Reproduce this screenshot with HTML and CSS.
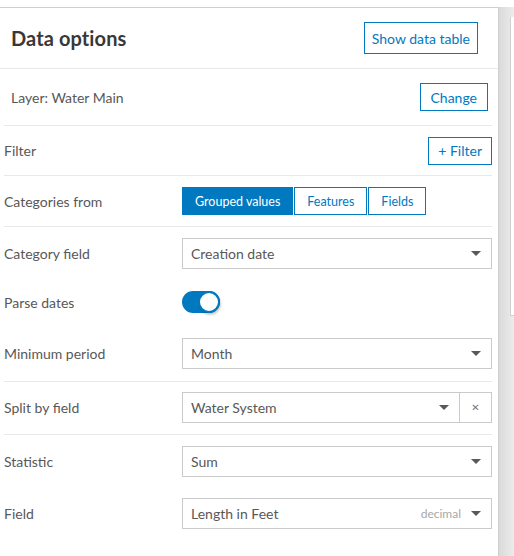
FILE: index.html
```html
<!DOCTYPE html>
<html lang="en">
<head>
  <meta charset="UTF-8" />
  <meta name="viewport" content="width=device-width, initial-scale=1.0" />
  <title>Data options</title>
  <link rel="stylesheet" href="styles.css">
</head>
<body>
  <div class="frame">
    <div class="panel">
      <div class="header">
        <h1>Data options</h1>
        <button class="btn">Show data table</button>
      </div>

      <div class="list">
        <div class="row layer-row">
          <span class="label">Layer: Water Main</span>
          <button class="btn">Change</button>
        </div>

        <div class="row filter-row">
          <span class="label">Filter</span>
          <button class="btn">+ Filter</button>
        </div>

        <div class="row">
          <span class="label">Categories from</span>
          <div class="control seg">
            <button class="btn on">Grouped values</button>
            <button class="btn">Features</button>
            <button class="btn">Fields</button>
          </div>
        </div>

        <div class="group">
          <div class="field">
            <span class="label">Category field</span>
            <div class="control select"><span>Creation date</span><i class="caret"></i></div>
          </div>
          <div class="field toggle-field">
            <span class="label">Parse dates</span>
            <div class="control"><span class="toggle"><span class="knob"></span></span></div>
          </div>
          <div class="field period">
            <span class="label">Minimum period</span>
            <div class="control select"><span>Month</span><i class="caret"></i></div>
          </div>
        </div>

        <div class="group split">
          <div class="field">
            <span class="label">Split by field</span>
            <div class="control combo">
              <div class="select"><span>Water System</span><i class="caret"></i></div>
              <button class="clear">&#x2715;</button>
            </div>
          </div>
        </div>

        <div class="group last">
          <div class="field">
            <span class="label">Statistic</span>
            <div class="control select"><span>Sum</span><i class="caret"></i></div>
          </div>
          <div class="field second">
            <span class="label">Field</span>
            <div class="control select"><span>Length in Feet</span><em class="hint">decimal</em><i class="caret"></i></div>
          </div>
        </div>
      </div>
    </div>

    <div class="side">
      <div class="side-box"></div>
    </div>
  </div>
</body>
</html>
```

FILE: styles.css
```css
* { box-sizing: border-box; }
body { margin: 0; padding-top: 7px; font-family: Lato, "Open Sans", sans-serif; font-size: 14px; color: #585858; background: #fff; }

.frame { display: flex; height: 549px; }
.panel { width: 499px; border-top: 1px solid #cfcfcf; border-right: 1px solid #cfcfcf; background: #fff; }
.side { flex: 1; background: linear-gradient(to right, #dadada, #ececec); padding-top: 10px; padding-left: 11px; }
.side-box { height: 299px; background: #fff; border-left: 1px solid #d0d0d0; border-bottom: 1px solid #d0d0d0; }

.header { height: 61px; display: flex; align-items: center; justify-content: space-between; padding: 0 20px 0 11px; border-bottom: 1px solid #e8e8e8; }
.header h1 { margin: 0; font-size: 20px; font-weight: 700; color: #383838; letter-spacing: 0.1px; }

.btn { font-family: inherit; font-size: 14px; color: #0079c1; background: #fff; border: 1px solid #0079c1; height: 32px; padding: 0 7px; cursor: pointer; }
.btn.on { background: #0079c1; color: #fff; }

.list { margin: 0 6px 0 4px; }
.row { display: flex; align-items: center; justify-content: space-between; height: 51px; border-bottom: 1px solid #e8e8e8; }
.row .btn { height: 28px; padding: 0 9px; }
.layer-row { height: 57px; padding: 0 4px 0 7px; }
.layer-row .btn { padding: 0 10px; }
.filter-row { height: 50px; }

.label { width: 178px; flex-shrink: 0; }
.row .control { flex: 1; }
.seg { display: flex; gap: 1px; }
.row .seg .btn { font-size: 12.5px; padding: 0 12px; }

.group { padding: 11px 0 12px; border-bottom: 1px solid #e8e8e8; }
.group.split { padding: 10px 0 11px; }
.group.last { border-bottom: 0; }
.field { display: flex; align-items: center; }
.field .control { flex: 1; }
.toggle-field { margin-top: 22px; }
.period { margin-top: 25px; }
.second { margin-top: 21px; }

.select { display: flex; align-items: center; height: 31px; border: 1px solid #cacaca; padding: 0 10px 0 8px; color: #585858; }
.select span { flex: 1; }
.hint { font-style: normal; font-size: 12px; color: #a8a8a8; margin-right: 10px; }
.caret { width: 0; height: 0; border-left: 5px solid transparent; border-right: 5px solid transparent; border-top: 5px solid #595959; }

.combo { display: flex; }
.combo .select { flex: 1; }
.clear { width: 32px; height: 31px; border: 1px solid #cacaca; border-left: 0; background: #fff; color: #777; font-size: 10px; padding: 0; font-family: "DejaVu Sans", sans-serif; }

.toggle { display: block; position: relative; width: 38px; height: 22px; border-radius: 11px; background: #0079c1; }
.knob { position: absolute; right: 0; top: 0; width: 22px; height: 22px; border-radius: 50%; background: #fff; border: 2px solid #0079c1; box-shadow: 1px 2px 2px rgba(0, 0, 0, 0.2); }
```
